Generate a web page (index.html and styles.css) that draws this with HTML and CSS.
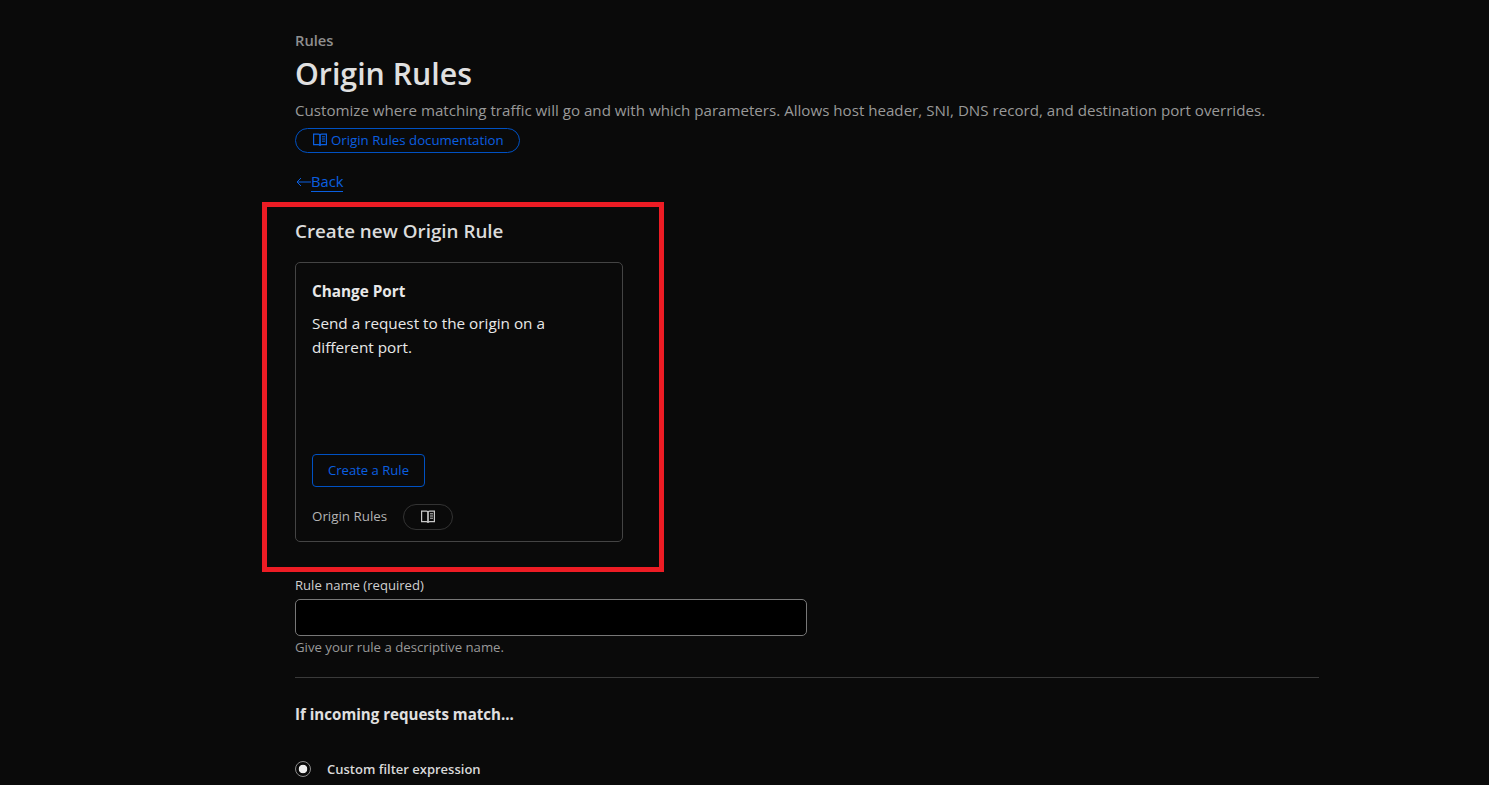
FILE: index.html
```html
<!DOCTYPE html>
<html lang="en">
<head>
<meta charset="utf-8">
<title>Origin Rules</title>
<link rel="stylesheet" href="styles.css">
</head>
<body>
<main class="page">
  <div class="crumb">Rules</div>
  <h1 class="title">Origin Rules</h1>
  <p class="desc">Customize where matching traffic will go and with which parameters. Allows host header, SNI, DNS record, and destination port overrides.</p>
  <a class="doc-pill">
    <svg class="book" viewBox="0 0 14 14" width="14" height="14" fill="none" stroke="currentColor" stroke-width="1.2"><path d="M.6 1.200h4.900c.8 0 1.500.5 1.500 1.200v10.300c0-.6-.7-1-1.500-1H.6z"/><path d="M13.400 1.200H8.500c-.8 0-1.500.5-1.500 1.200v10.300c0-.6.7-1 1.500-1h4.900z"/><path d="M9 3.800h3M9 6h3M9 8.200h3" stroke-width="1"/></svg>
    Origin Rules documentation
  </a>
  <div class="back">
    <svg class="arrow" viewBox="0 0 15 10" width="15" height="10" fill="none" stroke="currentColor" stroke-width="1"><path d="M15 5H1M5 1 1 5l4 4"/></svg>
    <a class="back-link">Back</a>
  </div>
  <section class="create">
    <h2 class="create-title">Create new Origin Rule</h2>
    <div class="card">
      <h3 class="card-title">Change Port</h3>
      <p class="card-text">Send a request to the origin on a different port.</p>
      <button class="btn">Create a Rule</button>
      <div class="card-foot">
        <span class="foot-label">Origin Rules</span>
        <span class="foot-pill">
          <svg class="book" viewBox="0 0 14 14" width="14" height="14" fill="none" stroke="currentColor" stroke-width="1.2"><path d="M.6 1.200h4.900c.8 0 1.500.5 1.500 1.200v10.300c0-.6-.7-1-1.500-1H.6z"/><path d="M13.400 1.200H8.500c-.8 0-1.500.5-1.500 1.200v10.300c0-.6.7-1 1.500-1h4.900z"/><path d="M9 3.800h3M9 6h3M9 8.200h3" stroke-width="1"/></svg>
        </span>
      </div>
    </div>
    <div class="annotation"></div>
  </section>
  <label class="field-label" for="rule-name">Rule name (required)</label>
  <input class="field-input" id="rule-name" type="text">
  <div class="field-help">Give your rule a descriptive name.</div>
  <hr class="divider">
  <h4 class="match-title">If incoming requests match...</h4>
  <div class="radio-row">
    <span class="radio"></span>
    <span class="radio-label">Custom filter expression</span>
  </div>
</main>
</body>
</html>
```
FILE: styles.css
```css
* { box-sizing: border-box; }
html, body { margin: 0; height: 785px; overflow: hidden; background: #0a0a0a; }
body { font-family: "Open Sans", "Noto Sans", "Liberation Sans", sans-serif; color: #d9d9d9; }
.page { width: 1319px; padding: 30px 0 0 295px; }
.crumb { font-size: 14.7px; line-height: 20px; font-weight: 600; color: #8f8f8f; }
.title { margin: 2px 0 0; font-size: 30.3px; line-height: 44px; font-weight: 600; color: #e0e0e0; }
.desc { margin: 2px 0 0; font-size: 15.13px; line-height: 24px; color: #999; white-space: nowrap; }
.doc-pill { display: inline-flex; align-items: center; gap: 4px; height: 25px; width: 225px; margin-top: 6px; padding: 0 0 2px 17px; border: 1px solid #0051c3; border-radius: 13px; font-size: 13.25px; color: #0a5fe0; white-space: nowrap; }
.back { margin-top: 16px; height: 24px; display: flex; align-items: center; font-size: 14.7px; color: #0a5fe0; }
.arrow { margin: 2px 0 0 1px; flex: none; }
.back-link { border-bottom: 1px solid #0a5fe0; line-height: 20px; }
.create { position: relative; margin-top: 9px; height: 370px; padding-top: 15px; }
.create-title { margin: 0; font-size: 18.8px; line-height: 28px; font-weight: 600; color: #dcdcdc; }
.card { width: 328px; height: 280px; margin-top: 17px; padding: 16px; border: 1px solid #444; border-radius: 5px; display: flex; flex-direction: column; }
.card-title { margin: 0; font-size: 15.3px; line-height: 24px; font-weight: 700; color: #e8e8e8; }
.card-text { margin: 8px 0 0; font-size: 15.3px; line-height: 24px; color: #e8e8e8; flex: 1; }
.btn { align-self: flex-start; width: 113px; height: 33px; padding: 0 0 2px; background: transparent; border: 1px solid #0051c3; border-radius: 4px; color: #0a5fe0; font: 13.1px "Open Sans", sans-serif; }
.card-foot { display: flex; align-items: center; gap: 16px; margin-top: 16px; height: 27px; margin-bottom: -5px; }
.foot-label { font-size: 13.35px; line-height: 18px; padding-bottom: 2px; color: #b3b3b3; }
.foot-pill { width: 50px; height: 26px; border: 1px solid #333; border-radius: 13px; display: flex; align-items: center; justify-content: center; color: #c8c8c8; }
.annotation { position: absolute; left: -33px; top: 0; width: 402px; height: 370px; border: 5px solid #ed1c24; }
.field-label { display: block; margin-top: 4px; font-size: 13.1px; line-height: 18px; color: #d0d0d0; }
.field-input { display: block; width: 512px; height: 37px; margin-top: 5px; background: #000; border: 1px solid #777; border-radius: 5px; }
.field-help { margin-top: 2px; font-size: 13.2px; line-height: 18px; color: #999; }
.divider { margin: 21px 0 0; width: 1024px; border: 0; border-top: 1px solid #3a3a3a; }
.match-title { margin: 25px 0 0; font-size: 15.1px; line-height: 22px; font-weight: 700; color: #e0e0e0; }
.radio-row { display: flex; align-items: center; gap: 16px; margin-top: 34px; }
.radio { width: 16px; height: 16px; border: 1px solid #8a8a8a; border-radius: 50%; position: relative; background: radial-gradient(circle, #eee 0 4px, transparent 4.6px); }
.radio-label { font-size: 13px; line-height: 20px; font-weight: 600; color: #d9d9d9; }
```
